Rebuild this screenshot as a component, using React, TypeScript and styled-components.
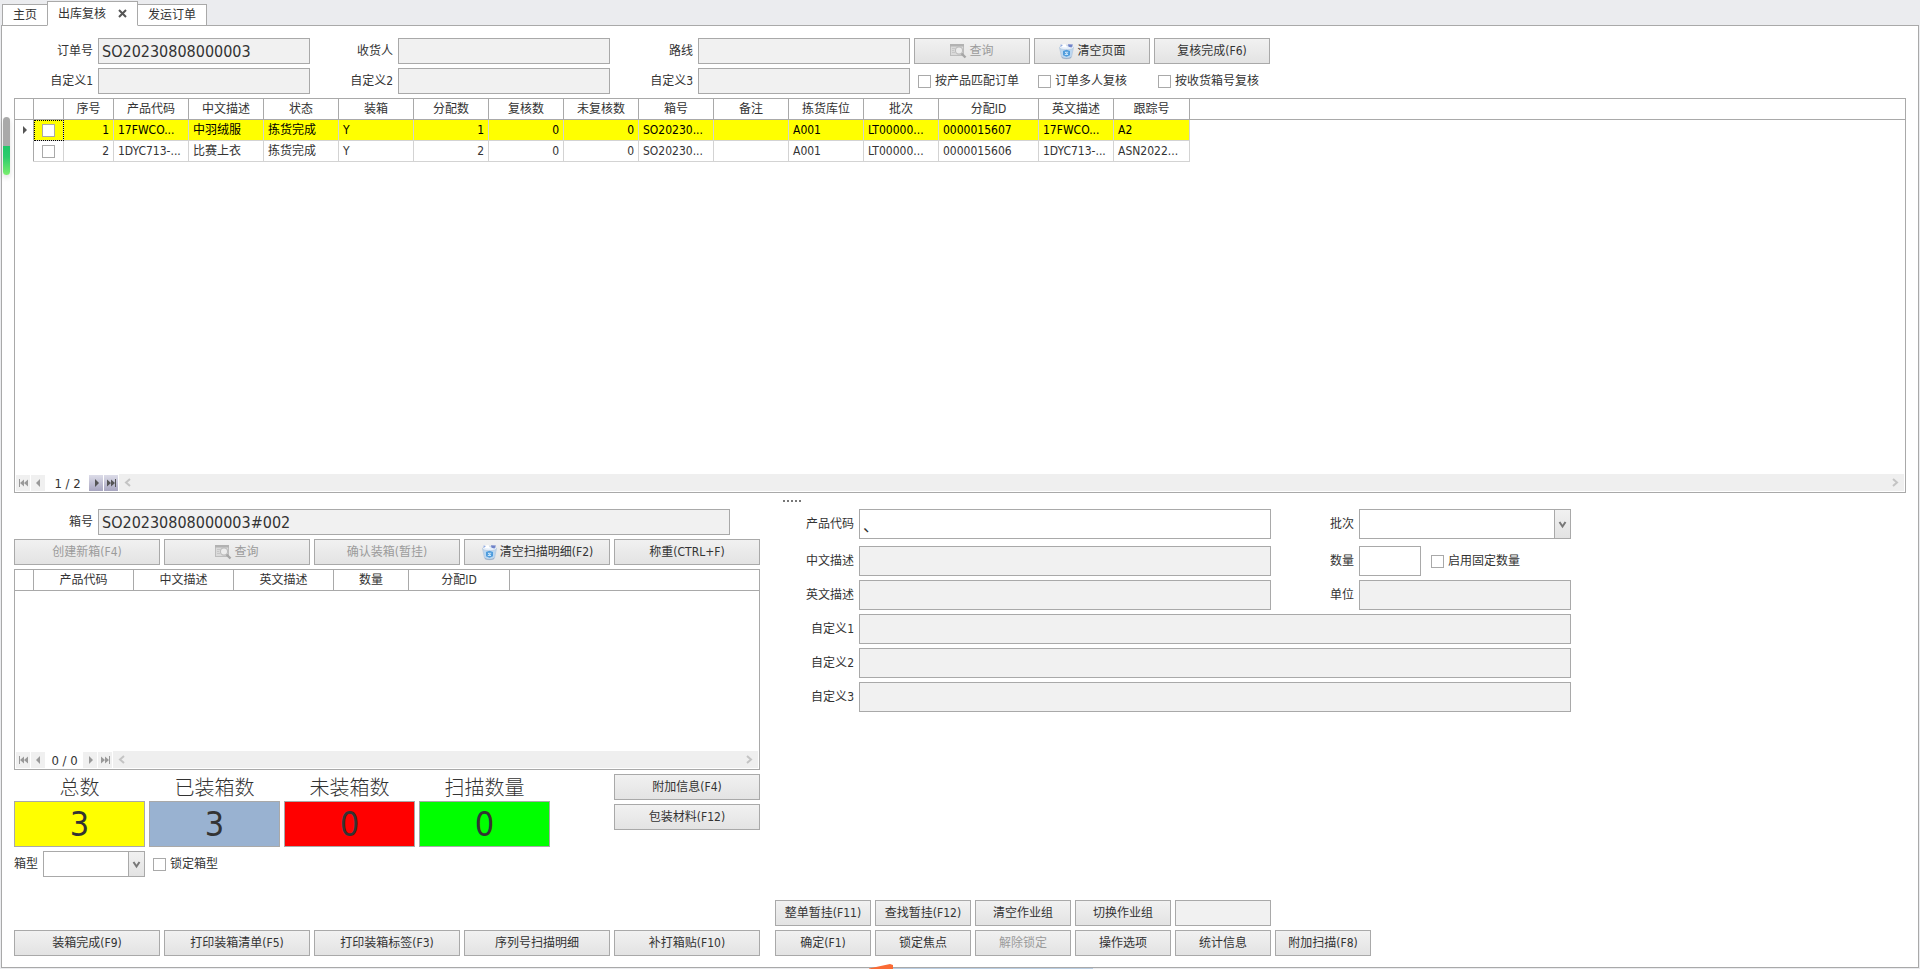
import React from "react";
import styled, { createGlobalStyle, css } from "styled-components";

const LINE = "#a9a9a9";
const TEXT = "#333333";

const GlobalStyle = createGlobalStyle`
  * { box-sizing: border-box; }
  html, body, #root { height: 100%; }
  body {
    margin: 0;
    background: #ebecef;
    color: ${TEXT};
    font: 12px/16px "DejaVu Sans Condensed", "Noto Sans CJK SC", sans-serif;
  }
  button, input, select { font: inherit; color: inherit; margin: 0; }
`;

const Page = styled.div`
  display: flex;
  flex-direction: column;
  min-height: 100%;
  padding: 1px;
  overflow: hidden;
`;

const TabBar = styled.nav`
  display: flex;
  align-items: flex-end;
  height: 25px;
  padding-left: 1px;
  margin-bottom: -1px;
`;

const Tab = styled.button<{ $active?: boolean }>`
  position: relative;
  z-index: ${(p) => (p.$active ? 1 : 0)};
  display: flex;
  align-items: center;
  gap: 12px;
  height: ${(p) => (p.$active ? 25 : 22)}px;
  padding: 0 10px;
  margin-right: -1px;
  border: 1px solid ${LINE};
  border-bottom-color: ${(p) => (p.$active ? "#fff" : LINE)};
  background: #fff;
`;

const Panel = styled.main`
  position: relative;
  flex: 1;
  display: flex;
  flex-direction: column;
  border: 1px solid ${LINE};
  background: #fff;
  padding: 12px 12px 11px;
`;

const HandleBar = styled.div`
  position: absolute;
  left: 1px;
  top: 91px;
  width: 7px;
  height: 58px;
  border-radius: 4px;
  background: linear-gradient(#a9a9a9 0 29px, #1fc768 29px, #2dcc6c 40px, #7aee6e 58px);
  box-shadow: 0 3px 5px rgba(0, 0, 0, 0.12);
`;

const Filters = styled.section`
  display: grid;
  grid-template-columns: 80px 212px 80px 212px 80px 212px auto;
  gap: 4px;
  align-items: center;
  margin-bottom: 4px;
  justify-content: start;
`;

const Label = styled.label`
  padding-right: 1px;
  text-align: right;
  white-space: nowrap;
`;

const Field = styled.input<{ $tall?: boolean }>`
  display: block;
  width: 100%;
  min-width: 0;
  height: ${(p) => (p.$tall ? 30 : 26)}px;
  padding: 0 3px;
  border: 1px solid ${LINE};
  border-radius: 0;
  outline: 0;
  background: ${(p) => (p.readOnly ? "#f1f1f1" : "#fff")};
  font-size: 16px;
`;

const Button = styled.button`
  display: flex;
  align-items: center;
  justify-content: center;
  gap: 2px;
  width: 100%;
  height: 26px;
  padding: 0;
  border: 1px solid ${LINE};
  background: linear-gradient(#f1f1f1, #e3e3e3);
  white-space: nowrap;
  &:disabled { color: #9b9b9b; }
`;

const ActionGroup = styled.div<{ $columns: string }>`
  display: grid;
  grid-template-columns: ${(p) => p.$columns};
  gap: 4px;
`;

const Check = styled.label`
  display: flex;
  align-items: center;
  gap: 4px;
  padding-left: 4px;
  white-space: nowrap;
`;

const Box = styled.input`
  appearance: none;
  display: block;
  flex: none;
  width: 13px;
  height: 13px;
  border: 1px solid ${LINE};
  background: #fff;
`;

const GridFrame = styled.section<{ $height: number }>`
  display: flex;
  flex-direction: column;
  height: ${(p) => p.$height}px;
  border: 1px solid ${LINE};
`;

const GridBody = styled.div`
  flex: 1;
  min-height: 0;
`;

const Table = styled.table`
  table-layout: fixed;
  width: 100%;
  border-collapse: separate;
  border-spacing: 0;
`;

const Head = styled.th`
  height: 21px;
  padding: 0;
  border-right: 1px solid ${LINE};
  border-bottom: 1px solid ${LINE};
  font-weight: normal;
  &:last-child { border-right: 0; }
`;

const Row = styled.tr<{ $selected?: boolean }>`
  color: ${(p) => (p.$selected ? "#000" : TEXT)};
  --fill: ${(p) => (p.$selected ? "#ff0" : "#fff")};
`;

const Cell = styled.td<{ $kind?: "number" | "marker" | "blank" }>`
  height: 21px;
  padding: 0 4px;
  overflow: hidden;
  white-space: nowrap;
  text-overflow: ellipsis;
  border-right: 1px solid #d3d3d3;
  border-bottom: 1px solid #d3d3d3;
  background: var(--fill);
  ${(p) => p.$kind === "number" && css`text-align: right;`}
  ${(p) =>
    p.$kind === "marker" &&
    css`
      padding: 0 0 0 7px;
      background: #fff;
      border-bottom-color: #fff;
      border-right-color: ${LINE};
    `}
  ${(p) =>
    p.$kind === "blank" &&
    css`
      background: #fff;
      border: 0;
    `}
`;

const CheckCell = styled(Cell)<{ $focus?: boolean }>`
  padding: 0 0 0 8px;
  outline: ${(p) => (p.$focus ? "1px dotted #000" : "none")};
  outline-offset: -1px;
`;

const Pager = styled.div`
  display: flex;
  align-items: center;
  height: 18px;
  padding: 0 1px 1px;
`;

const PageButton = styled.button<{ $on?: boolean }>`
  display: flex;
  align-items: center;
  justify-content: center;
  width: 14px;
  height: 16px;
  margin-right: 1px;
  padding: 0;
  border: 0;
  color: ${(p) => (p.$on ? "#555" : "#999")};
  background: ${(p) => (p.$on ? "linear-gradient(#dcdce8, #a8a6c0)" : "#f0f0f0")};
`;

const PageCount = styled.span<{ $wide?: boolean }>`
  width: ${(p) => (p.$wide ? 43 : 37)}px;
  padding-top: 2px;
  font-size: 13px;
  text-align: center;
  white-space: pre;
`;

const Track = styled.div`
  flex: 1;
  display: flex;
  align-items: center;
  justify-content: space-between;
  height: 17px;
  padding: 0 4px;
  background: #efefef;
  color: #c4c4c4;
`;

const Splitter = styled.div`
  display: flex;
  justify-content: center;
  gap: 2px;
  height: 16px;
  padding-top: 7px;
  padding-right: 336px;
`;

const Dot = styled.i`
  width: 2px;
  height: 2px;
  background: #777;
`;

const Lower = styled.div`
  flex: 1;
  display: grid;
  grid-template-columns: 746px 1fr;
  column-gap: 15px;
`;

const Column = styled.section`
  display: flex;
  flex-direction: column;
`;

const BoxRow = styled.div`
  display: grid;
  grid-template-columns: 80px 632px;
  column-gap: 4px;
  align-items: center;
  margin-bottom: 4px;
`;

const Stack = styled.div<{ $gap?: number }>`
  display: flex;
  flex-direction: column;
  gap: ${(p) => p.$gap ?? 4}px;
`;

const Summary = styled.div`
  display: grid;
  grid-template-columns: 536px 146px;
  justify-content: space-between;
  margin-top: 4px;
`;

const Counters = styled.div`
  display: grid;
  grid-template-columns: repeat(4, 131px);
  gap: 4px;
`;

const Counter = styled.div`
  text-align: center;
`;

const CounterTitle = styled.div`
  height: 27px;
  font: 300 20px/26px "Noto Sans CJK SC", sans-serif;
`;

const CounterValue = styled.output<{ $fill: string }>`
  display: block;
  height: 46px;
  border: 1px solid ${LINE};
  background: ${(p) => p.$fill};
  font-size: 34px;
  line-height: 45px;
`;

const BoxType = styled.div`
  display: flex;
  align-items: center;
  gap: 4px;
  margin-top: 4px;
`;

const SelectWrap = styled.span<{ $tall?: boolean }>`
  position: relative;
  display: block;
  width: ${(p) => (p.$tall ? "100%" : "102px")};
  height: ${(p) => (p.$tall ? 30 : 26)}px;
`;

const Select = styled.select`
  appearance: none;
  display: block;
  width: 100%;
  height: 100%;
  border: 1px solid ${LINE};
  border-radius: 0;
  background: #fff;
`;

const SelectArrow = styled.span`
  position: absolute;
  inset: 1px 1px 1px auto;
  display: flex;
  align-items: center;
  justify-content: center;
  width: 16px;
  border-left: 1px solid ${LINE};
  background: linear-gradient(#f1f1f1, #e3e3e3);
  color: #777;
  pointer-events: none;
`;

const Bottom = styled.div`
  margin-top: auto;
`;

const Details = styled.div`
  display: grid;
  grid-template-columns: 80px 412px 80px 212px;
  gap: 4px;
  align-items: center;
`;

const Wide = styled.div`
  grid-column: 2 / -1;
`;

const Quantity = styled.div`
  display: grid;
  grid-template-columns: 62px auto;
  column-gap: 6px;
  align-items: center;
`;

const Dock = styled.svg`
  position: absolute;
  left: 867px;
  bottom: -2px;
`;

const SearchIcon = () => (
  <svg width="17" height="16" viewBox="0 0 17 16" aria-hidden="true">
    <rect x="0.500" y="1.500" width="13" height="11" fill="#dadada" stroke="#bcbcbc" />
    <path d="M0 1h14v2.500H0z" fill="#b2b2b2" />
    <path d="M2 5.500h3M2 7.500h2M2 9.500h3" stroke="#c6c6c6" />
    <circle cx="9" cy="7.500" r="3.600" fill="#ececec" stroke="#bdbdbd" strokeWidth="1.200" />
    <path d="M11.500 10.500l4 4" stroke="#a6a6a6" strokeWidth="2.400" />
  </svg>
);

const BinIcon = () => (
  <svg width="17" height="17" viewBox="0 0 17 17" aria-hidden="true">
    <path d="M1.500 4.500L3.500 14q.3 1.800 5 1.800t5-1.800l2-9.500z" fill="#bcd7f0" stroke="#b3c6dc" strokeWidth=".7" />
    <ellipse cx="8.500" cy="4.500" rx="7" ry="2.200" fill="#e6effa" stroke="#b9cade" strokeWidth=".7" />
    <path d="M3 4l1-2.500L7.500 1l1.500 3.500z" fill="#fff" />
    <path d="M2.800 4L2.500 1.500l2.500.5z" fill="#8fabe4" />
    <path d="M10 1.200l5 .3-1.500 3-3-.7z" fill="#6f82c8" />
    <path d="M5 8l3.500-1.200L12 8v4.200l-3.500 1.600L5 12.200z" fill="#4f9cdc" />
    <path d="M7 9.300h3.200M6.800 11.500H10M7 9.300l3 2.200" stroke="#d6ebfc" strokeWidth=".9" />
    <path d="M3.500 13.500q5 3 10 0l-.5 1.500q-4.500 2-9 0z" fill="#9fb0c6" />
  </svg>
);

const CloseIcon = () => (
  <svg width="9" height="9" viewBox="0 0 9 9" aria-hidden="true">
    <path d="M1 1l7 7M8 1L1 8" stroke="#555" strokeWidth="2" />
  </svg>
);

const ArrowGlyph = ({ back, end }: { back?: boolean; end?: boolean }) => (
  <svg width="11" height="8" viewBox="0 0 11 8" fill="currentColor" aria-hidden="true">
    <g transform={back ? "matrix(-1 0 0 1 11 0)" : undefined}>
      {end ? <path d="M1 0.500l4 3.500-4 3.500zM5 0.500l4 3.500-4 3.500zM9 0h1v8H9z" /> : <path d="M4 0l4 4-4 4z" />}
    </g>
  </svg>
);

const Chevron = ({ dir }: { dir: "left" | "right" | "down" }) => {
  const d = { left: "M7 1L3 4.500 7 8", right: "M2 1l4 3.500L2 8", down: "M1.500 2l3 4.500L7.500 2" }[dir];
  return (
    <svg width="9" height="9" viewBox="0 0 9 9" aria-hidden="true">
      <path d={d} fill="none" stroke="currentColor" strokeWidth="2" />
    </svg>
  );
};

const Tick = ({ text }: { text: string }) => (
  <Check>
    <Box type="checkbox" />
    {text}
  </Check>
);

const LabeledField = ({ id, label, value = "", tall, editable }: {
  id: string; label: string; value?: string; tall?: boolean; editable?: boolean;
}) => (
  <>
    <Label htmlFor={id}>{label}</Label>
    <Field id={id} defaultValue={value} $tall={tall} readOnly={!editable} />
  </>
);

const PagerBar = ({ text, forward }: { text: string; forward?: boolean }) => (
  <Pager>
    <PageButton aria-label="首页"><ArrowGlyph back end /></PageButton>
    <PageButton aria-label="上一页"><ArrowGlyph back /></PageButton>
    <PageCount $wide={forward}>{text}</PageCount>
    <PageButton aria-label="下一页" $on={forward}><ArrowGlyph /></PageButton>
    <PageButton aria-label="末页" $on={forward}><ArrowGlyph end /></PageButton>
    <Track><Chevron dir="left" /><Chevron dir="right" /></Track>
  </Pager>
);

const DropDown = ({ id, tall }: { id: string; tall?: boolean }) => (
  <SelectWrap $tall={tall}>
    <Select id={id}><option></option></Select>
    <SelectArrow><Chevron dir="down" /></SelectArrow>
  </SelectWrap>
);

const orderColumns: [string, number][] = [
  ["序号", 50], ["产品代码", 75], ["中文描述", 75], ["状态", 75], ["装箱", 75], ["分配数", 75],
  ["复核数", 75], ["未复核数", 75], ["箱号", 75], ["备注", 75], ["拣货库位", 75], ["批次", 75],
  ["分配ID", 100], ["英文描述", 75], ["跟踪号", 76],
];

const orderRows = [
  ["1", "17FWCO...", "中羽绒服", "拣货完成", "Y", "1", "0", "0", "SO20230...", "", "A001", "LT00000...", "0000015607", "17FWCO...", "A2"],
  ["2", "1DYC713-...", "比赛上衣", "拣货完成", "Y", "2", "0", "0", "SO20230...", "", "A001", "LT00000...", "0000015606", "1DYC713-...", "ASN2022..."],
];

const numeric = new Set([0, 5, 6, 7]);

const scanColumns: [string, number][] = [
  ["产品代码", 100], ["中文描述", 100], ["英文描述", 100], ["数量", 75], ["分配ID", 101],
];

const counters = [
  ["总数", "3", "#ffff00"], ["已装箱数", "3", "#99b2d1"], ["未装箱数", "0", "#ff0000"], ["扫描数量", "0", "#00ff00"],
];

export default function App() {
  return (
    <Page>
      <GlobalStyle />
      <TabBar>
        <Tab>主页</Tab>
        <Tab $active>出库复核<CloseIcon /></Tab>
        <Tab>发运订单</Tab>
      </TabBar>
      <Panel>
        <HandleBar />
        <Filters>
          <LabeledField id="order" label="订单号" value="SO20230808000003" />
          <LabeledField id="consignee" label="收货人" />
          <LabeledField id="route" label="路线" />
          <ActionGroup $columns="repeat(3, 116px)">
            <Button disabled><SearchIcon />查询</Button>
            <Button><BinIcon />清空页面</Button>
            <Button>复核完成(F6)</Button>
          </ActionGroup>
          <LabeledField id="custom1" label="自定义1" />
          <LabeledField id="custom2" label="自定义2" />
          <LabeledField id="custom3" label="自定义3" />
          <ActionGroup $columns="repeat(3, 116px)">
            <Tick text="按产品匹配订单" />
            <Tick text="订单多人复核" />
            <Tick text="按收货箱号复核" />
          </ActionGroup>
        </Filters>

        <GridFrame $height={395}>
          <GridBody>
            <Table>
              <colgroup>
                <col width={19} />
                <col width={30} />
                {orderColumns.map(([name, width]) => <col key={name} width={width} />)}
                <col />
              </colgroup>
              <thead>
                <tr>
                  <Head />
                  <Head />
                  {orderColumns.map(([name]) => <Head key={name}>{name}</Head>)}
                  <Head />
                </tr>
              </thead>
              <tbody>
                {orderRows.map((row, r) => (
                  <Row key={row[0]} $selected={r === 0}>
                    <Cell $kind="marker">
                      {r === 0 && (
                        <svg width="5" height="8" viewBox="0 0 5 8" aria-hidden="true">
                          <path d="M1 0l4 4-4 4z" fill="#555" />
                        </svg>
                      )}
                    </Cell>
                    <CheckCell $focus={r === 0}>
                      <Box type="checkbox" aria-label={`选择 ${row[0]}`} />
                    </CheckCell>
                    {row.map((value, c) => (
                      <Cell key={c} $kind={numeric.has(c) ? "number" : undefined}>{value}</Cell>
                    ))}
                    <Cell $kind="blank" />
                  </Row>
                ))}
              </tbody>
            </Table>
          </GridBody>
          <PagerBar text="1 / 2" forward />
        </GridFrame>

        <Splitter><Dot /><Dot /><Dot /><Dot /><Dot /></Splitter>

        <Lower>
          <Column>
            <BoxRow>
              <LabeledField id="box" label="箱号" value="SO20230808000003#002" />
            </BoxRow>
            <Stack>
              <ActionGroup $columns="repeat(5, 1fr)">
                <Button disabled>创建新箱(F4)</Button>
                <Button disabled><SearchIcon />查询</Button>
                <Button disabled>确认装箱(暂挂)</Button>
                <Button><BinIcon />清空扫描明细(F2)</Button>
                <Button>称重(CTRL+F)</Button>
              </ActionGroup>
              <GridFrame $height={201}>
                <GridBody>
                  <Table>
                    <colgroup>
                      <col width={19} />
                      {scanColumns.map(([name, width]) => <col key={name} width={width} />)}
                      <col />
                    </colgroup>
                    <thead>
                      <tr>
                        <Head />
                        {scanColumns.map(([name]) => <Head key={name}>{name}</Head>)}
                        <Head />
                      </tr>
                    </thead>
                  </Table>
                </GridBody>
                <PagerBar text="0 / 0" />
              </GridFrame>
            </Stack>
            <Summary>
              <div>
                <Counters>
                  {counters.map(([name, value, fill]) => (
                    <Counter key={name}>
                      <CounterTitle>{name}</CounterTitle>
                      <CounterValue $fill={fill}>{value}</CounterValue>
                    </Counter>
                  ))}
                </Counters>
                <BoxType>
                  <Label htmlFor="boxType">箱型</Label>
                  <DropDown id="boxType" />
                  <Tick text="锁定箱型" />
                </BoxType>
              </div>
              <Stack>
                <Button>附加信息(F4)</Button>
                <Button>包装材料(F12)</Button>
              </Stack>
            </Summary>
            <Bottom>
              <ActionGroup $columns="repeat(5, 1fr)">
                <Button>装箱完成(F9)</Button>
                <Button>打印装箱清单(F5)</Button>
                <Button>打印装箱标签(F3)</Button>
                <Button>序列号扫描明细</Button>
                <Button>补打箱贴(F10)</Button>
              </ActionGroup>
            </Bottom>
          </Column>

          <Column>
            <Stack $gap={7}>
              <Details>
                <LabeledField id="sku" label="产品代码" value="、" tall editable />
                <Label htmlFor="batch">批次</Label>
                <DropDown id="batch" tall />
              </Details>
              <Details>
                <LabeledField id="nameCn" label="中文描述" tall />
                <Label htmlFor="qty">数量</Label>
                <Quantity>
                  <Field id="qty" $tall />
                  <Tick text="启用固定数量" />
                </Quantity>
                <LabeledField id="nameEn" label="英文描述" tall />
                <LabeledField id="unit" label="单位" tall />
                {[1, 2, 3].map((n) => (
                  <React.Fragment key={n}>
                    <Label htmlFor={`detail${n}`}>自定义{n}</Label>
                    <Wide><Field id={`detail${n}`} $tall readOnly /></Wide>
                  </React.Fragment>
                ))}
              </Details>
            </Stack>
            <Bottom>
              <ActionGroup $columns="repeat(6, 96px)">
                <Button>整单暂挂(F11)</Button>
                <Button>查找暂挂(F12)</Button>
                <Button>清空作业组</Button>
                <Button>切换作业组</Button>
                <Field aria-label="作业组" readOnly />
                <span />
                <Button>确定(F1)</Button>
                <Button>锁定焦点</Button>
                <Button disabled>解除锁定</Button>
                <Button>操作选项</Button>
                <Button>统计信息</Button>
                <Button>附加扫描(F8)</Button>
              </ActionGroup>
            </Bottom>
          </Column>
        </Lower>
        <Dock width="226" height="6" viewBox="0 0 226 6" aria-hidden="true">
          <path d="M22 5h202v1H22z" fill="#b9cde2" />
          <path d="M0 5.500L21 1l3 1v4H0z" fill="#fa6b35" />
        </Dock>
      </Panel>
    </Page>
  );
}
